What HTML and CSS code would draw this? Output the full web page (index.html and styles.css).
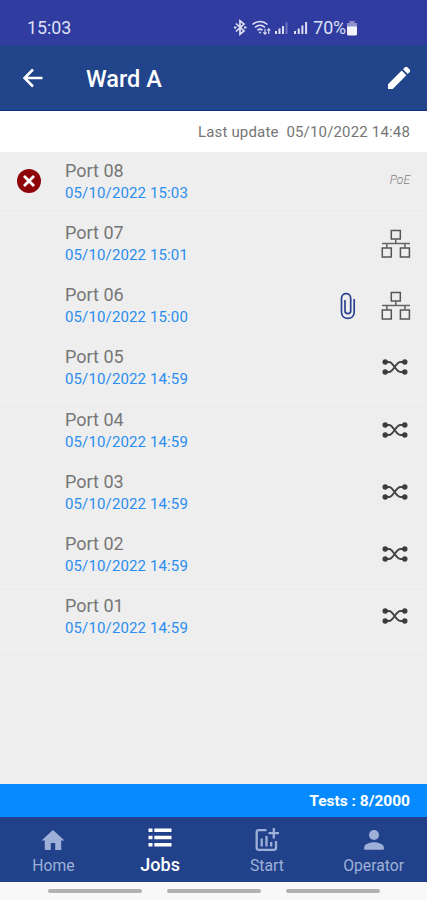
FILE: index.html
```html
<!DOCTYPE html>
<html lang="en">
<head>
    <meta charset="UTF-8">
    <meta name="viewport" content="width=device-width, initial-scale=1.0">
    <title>Ward A</title>
    <link rel="stylesheet" href="styles.css">
</head>
<body>
    <!-- shared row icons -->
    <svg class="symbols" width="0" height="0">
        <symbol id="network" viewBox="0 0 30 30">
            <path d="M10.3 1.5h9v8.5h-9zM1.3 19h9v9h-9zM19.4 19h9v9h-9z" fill="none" stroke="#555" stroke-width="1.5"/>
            <path d="M14.8 10v4.5M1 14.5h28M5.8 14.5v4.5M23.9 14.5v4.5" fill="none" stroke="#666" stroke-width="1.6"/>
        </symbol>
        <symbol id="cross" viewBox="0 0 26 18">
            <path d="M2.5 4H7C11.5 4 13.5 14 18.500 14H23.500M2.500 14H7C11.500 14 13.500 4 18.500 4H23.500" fill="none" stroke="#444" stroke-width="2"/>
            <g fill="#3c3c3c">
                <circle cx="3.200" cy="4" r="2.700"/>
                <circle cx="3.200" cy="14" r="2.700"/>
                <circle cx="22.800" cy="4" r="2.700"/>
                <circle cx="22.800" cy="14" r="2.700"/>
            </g>
        </symbol>
    </svg>

    <div class="status-bar">
        <span class="clock">15:03</span>
        <div class="status-icons">
            <svg width="77" height="20" viewBox="0 0 77 20" fill="none" stroke="#dfe0f6">
                <path d="M3 5.500l8 7.500-4 3.300V2.700l4 3.300-8 7.500" stroke-width="1.700"/>
                <path d="M1 9.500h2.500M11 9.500h2.500" stroke-width="2.200"/>
                <path d="M19.500 6.500c4.500-4 10.500-4 15 0M22 9.500c3-2.800 7-2.800 10 0M24.500 12.300c1.600-1.500 3.500-1.500 5 0" stroke-width="1.600"/>
                <circle cx="27" cy="14.500" r="1" fill="#dfe0f6" stroke="none"/>
                <path d="M32 16v-5M30.300 14.300l1.700 1.900 1.600-1.900M35.800 16v-5M34.300 12.500l1.500-1.700 1.500 1.700" stroke-width="1.100"/>
                <path d="M43 16v-3M46.500 16v-5.500M50 16V8" stroke-width="2"/>
                <path d="M53.500 16V4.500" stroke-width="2" opacity=".35"/>
                <path d="M62 16v-3M65.700 16v-5.500M69.400 16V7.500M73.100 16V4" stroke-width="2"/>
            </svg>
            <span class="percent">70%</span>
            <svg class="battery" width="12" height="16" viewBox="0 0 12 16">
                <path d="M3.500 0h5v2H11v4H1V2h2.500z" fill="#8e92cf"/>
                <path d="M1 5.500h10V13q0 1.500-1.500 1.500h-7Q1 14.500 1 13z" fill="#f3f3fc"/>
            </svg>
        </div>
    </div>

    <header class="top-bar">
        <svg class="back" width="22" height="22" viewBox="0 0 22 22" fill="none" stroke="#fff" stroke-width="2.500">
            <path d="M20.500 11H3M11 2.500L2.500 11l8.500 8.500"/>
        </svg>
        <h1>Ward A</h1>
        <svg class="edit" width="24" height="24" viewBox="0 0 24 24" fill="#fff">
            <path d="M1 23v-4.700L14.700 4.600l4.700 4.700L5.700 23zM16 3.300l2-2q1.200-1 2.400 0L22.700 3.600q1 1.200 0 2.400l-2 2z"/>
        </svg>
    </header>

    <div class="last-update"><span>Last update&nbsp; 05/10/2022 14:48</span></div>

    <main class="port-list">
        <div class="port">
            <div class="state">
                <svg width="24" height="24" viewBox="0 0 24 24">
                    <circle cx="12" cy="12" r="12" fill="#8e0509"/>
                    <path d="M7 7l10 10M17 7L7 17" stroke="#fff" stroke-width="2.800"/>
                </svg>
            </div>
            <div class="info"><p class="name">Port 08</p><p class="date">05/10/2022 15:03</p></div>
            <span class="poe">PoE</span>
        </div>
        <div class="port">
            <div class="state"></div>
            <div class="info"><p class="name">Port 07</p><p class="date">05/10/2022 15:01</p></div>
            <svg class="network"><use href="#network"/></svg>
        </div>
        <div class="port">
            <div class="state"></div>
            <div class="info"><p class="name">Port 06</p><p class="date">05/10/2022 15:00</p></div>
            <svg class="clip" width="16" height="28" viewBox="0 0 16 28" fill="none" stroke="#2b4290" stroke-width="1.700">
                <path d="M14.200 7v13c0 8.500-12.700 8.500-12.700 0V6.500c0-6.500 9.200-6.500 9.200 0V19c0 3.500-5.700 3.500-5.700 0V8"/>
            </svg>
            <svg class="network"><use href="#network"/></svg>
        </div>
        <div class="port">
            <div class="state"></div>
            <div class="info"><p class="name">Port 05</p><p class="date">05/10/2022 14:59</p></div>
            <svg class="cross"><use href="#cross"/></svg>
        </div>
        <div class="port">
            <div class="state"></div>
            <div class="info"><p class="name">Port 04</p><p class="date">05/10/2022 14:59</p></div>
            <svg class="cross"><use href="#cross"/></svg>
        </div>
        <div class="port">
            <div class="state"></div>
            <div class="info"><p class="name">Port 03</p><p class="date">05/10/2022 14:59</p></div>
            <svg class="cross"><use href="#cross"/></svg>
        </div>
        <div class="port">
            <div class="state"></div>
            <div class="info"><p class="name">Port 02</p><p class="date">05/10/2022 14:59</p></div>
            <svg class="cross"><use href="#cross"/></svg>
        </div>
        <div class="port">
            <div class="state"></div>
            <div class="info"><p class="name">Port 01</p><p class="date">05/10/2022 14:59</p></div>
            <svg class="cross"><use href="#cross"/></svg>
        </div>
    </main>

    <div class="tests">Tests : 8/2000</div>

    <nav class="tabs">
        <a class="tab">
            <svg width="26" height="26" viewBox="0 0 26 26" fill="currentColor">
                <path d="M10.800 23v-7h4.400v7h6V13.500h3.300L13 3 1.500 13.500h3.300V23z"/>
            </svg>
            <span>Home</span>
        </a>
        <a class="tab active">
            <svg width="26" height="26" viewBox="0 0 26 26" fill="currentColor">
                <path d="M1.500 1.500h4v3.600h-4zM7.300 1.500h17.200v3.600H7.300zM1.500 8.700h4v3.600h-4zM7.300 8.700h17.200v3.600H7.300zM1.500 16h4v3.600h-4zM7.300 16h17.200v3.600H7.300z"/>
            </svg>
            <span>Jobs</span>
        </a>
        <a class="tab">
            <svg width="26" height="26" viewBox="0 0 26 26" fill="none" stroke="currentColor" stroke-width="2.300">
                <path d="M12.500 3.200H4.700Q2.700 3.200 2.700 5.200v15.600q0 2 2 2H20q2 0 2-2V14"/>
                <path d="M7.700 19.500v-8M12.500 19.500V9M17.200 19.500v-4.500M19.800 1v10.500M14.500 6.200H25"/>
            </svg>
            <span>Start</span>
        </a>
        <a class="tab">
            <svg width="26" height="26" viewBox="0 0 26 26" fill="currentColor">
                <circle cx="13" cy="8" r="5"/>
                <path d="M3.200 22.800v-2.500c0-3.200 6.500-5 9.800-5s9.800 1.800 9.800 5v2.500z"/>
            </svg>
            <span>Operator</span>
        </a>
    </nav>

    <div class="gesture-bar">
        <span></span>
        <span></span>
        <span></span>
    </div>
</body>
</html>
```
FILE: styles.css
```css
* {
    box-sizing: border-box;
}

body {
    margin: 0;
    height: 900px;
    display: flex;
    flex-direction: column;
    overflow: hidden;
    font-family: Roboto, sans-serif;
    background-color: #eee;
}

h1, p {
    margin: 0;
}

svg {
    display: block;
    flex-shrink: 0;
}

.symbols {
    display: none;
}

.status-bar {
    height: 45px;
    flex-shrink: 0;
    display: flex;
    justify-content: space-between;
    padding: 10px 69px 0 27px;
    background-color: #303c9f;
    color: #dfe0f6;
    font-size: 17.8px;
    line-height: 35px;
}

.status-icons {
    display: flex;
}

.status-icons svg:first-child {
    margin: 8px 3px 0 0;
}

.percent {
    letter-spacing: -0.1px;
}

.battery {
    margin-top: 11px;
}

.top-bar {
    height: 66px;
    flex-shrink: 0;
    display: flex;
    align-items: center;
    padding: 0 16px 0 22px;
    background-color: #21448b;
    border-bottom: 1px solid #0d2f7e;
    color: #fff;
}

.top-bar h1 {
    flex: 1;
    margin: 3px 0 0 42px;
    font-size: 23.5px;
    font-weight: 500;
    line-height: 30px;
}

.last-update {
    height: 41px;
    flex-shrink: 0;
    padding-right: 17px;
    background-color: #fff;
    color: #757575;
    font-size: 15px;
    letter-spacing: 0.17px;
    line-height: 42px;
    text-align: right;
}

.port-list {
    flex: 1;
}

.port {
    height: 62.15px;
    display: flex;
    align-items: center;
    padding: 0 16px 2px 0;
    border-bottom: 1px solid #f2f2f2;
}

.state {
    width: 65px;
    padding: 0 0 1px 17px;
}

.info {
    flex: 1;
}

.name {
    color: #777;
    font-size: 18px;
    line-height: 23px;
}

.date {
    color: #2a8df0;
    font-size: 15px;
    letter-spacing: 0.13px;
    line-height: 22px;
}

.poe {
    padding: 0 1px 3px 0;
    color: #808080;
    font-size: 12px;
    font-style: italic;
    font-weight: 300;
    line-height: 16px;
}

.network {
    width: 30px;
    height: 30px;
}

.clip {
    margin-right: 25px;
}

.cross {
    width: 26px;
    height: 18px;
    margin: 0 3px 1px 0;
}

.tests {
    height: 33px;
    flex-shrink: 0;
    padding-right: 17px;
    background-color: #058bff;
    color: #fff;
    font-size: 15.5px;
    font-weight: 700;
    line-height: 34px;
    text-align: right;
}

.tabs {
    height: 65px;
    flex-shrink: 0;
    display: flex;
    background-color: #21428a;
}

.tab {
    flex: 1;
    display: flex;
    flex-direction: column;
    align-items: center;
    padding-top: 10px;
    color: #9fb0d8;
    font-size: 15.7px;
    line-height: 26px;
}

.tab.active {
    color: #fff;
    font-size: 18px;
    font-weight: 500;
    line-height: 24px;
}

.gesture-bar {
    height: 18px;
    flex-shrink: 0;
    display: flex;
    justify-content: center;
    gap: 25px;
    padding-top: 7px;
    background-color: #f8f8f8;
}

.gesture-bar span {
    width: 94px;
    height: 4px;
    border-radius: 2px;
    background-color: #b2b2b2;
}
```
